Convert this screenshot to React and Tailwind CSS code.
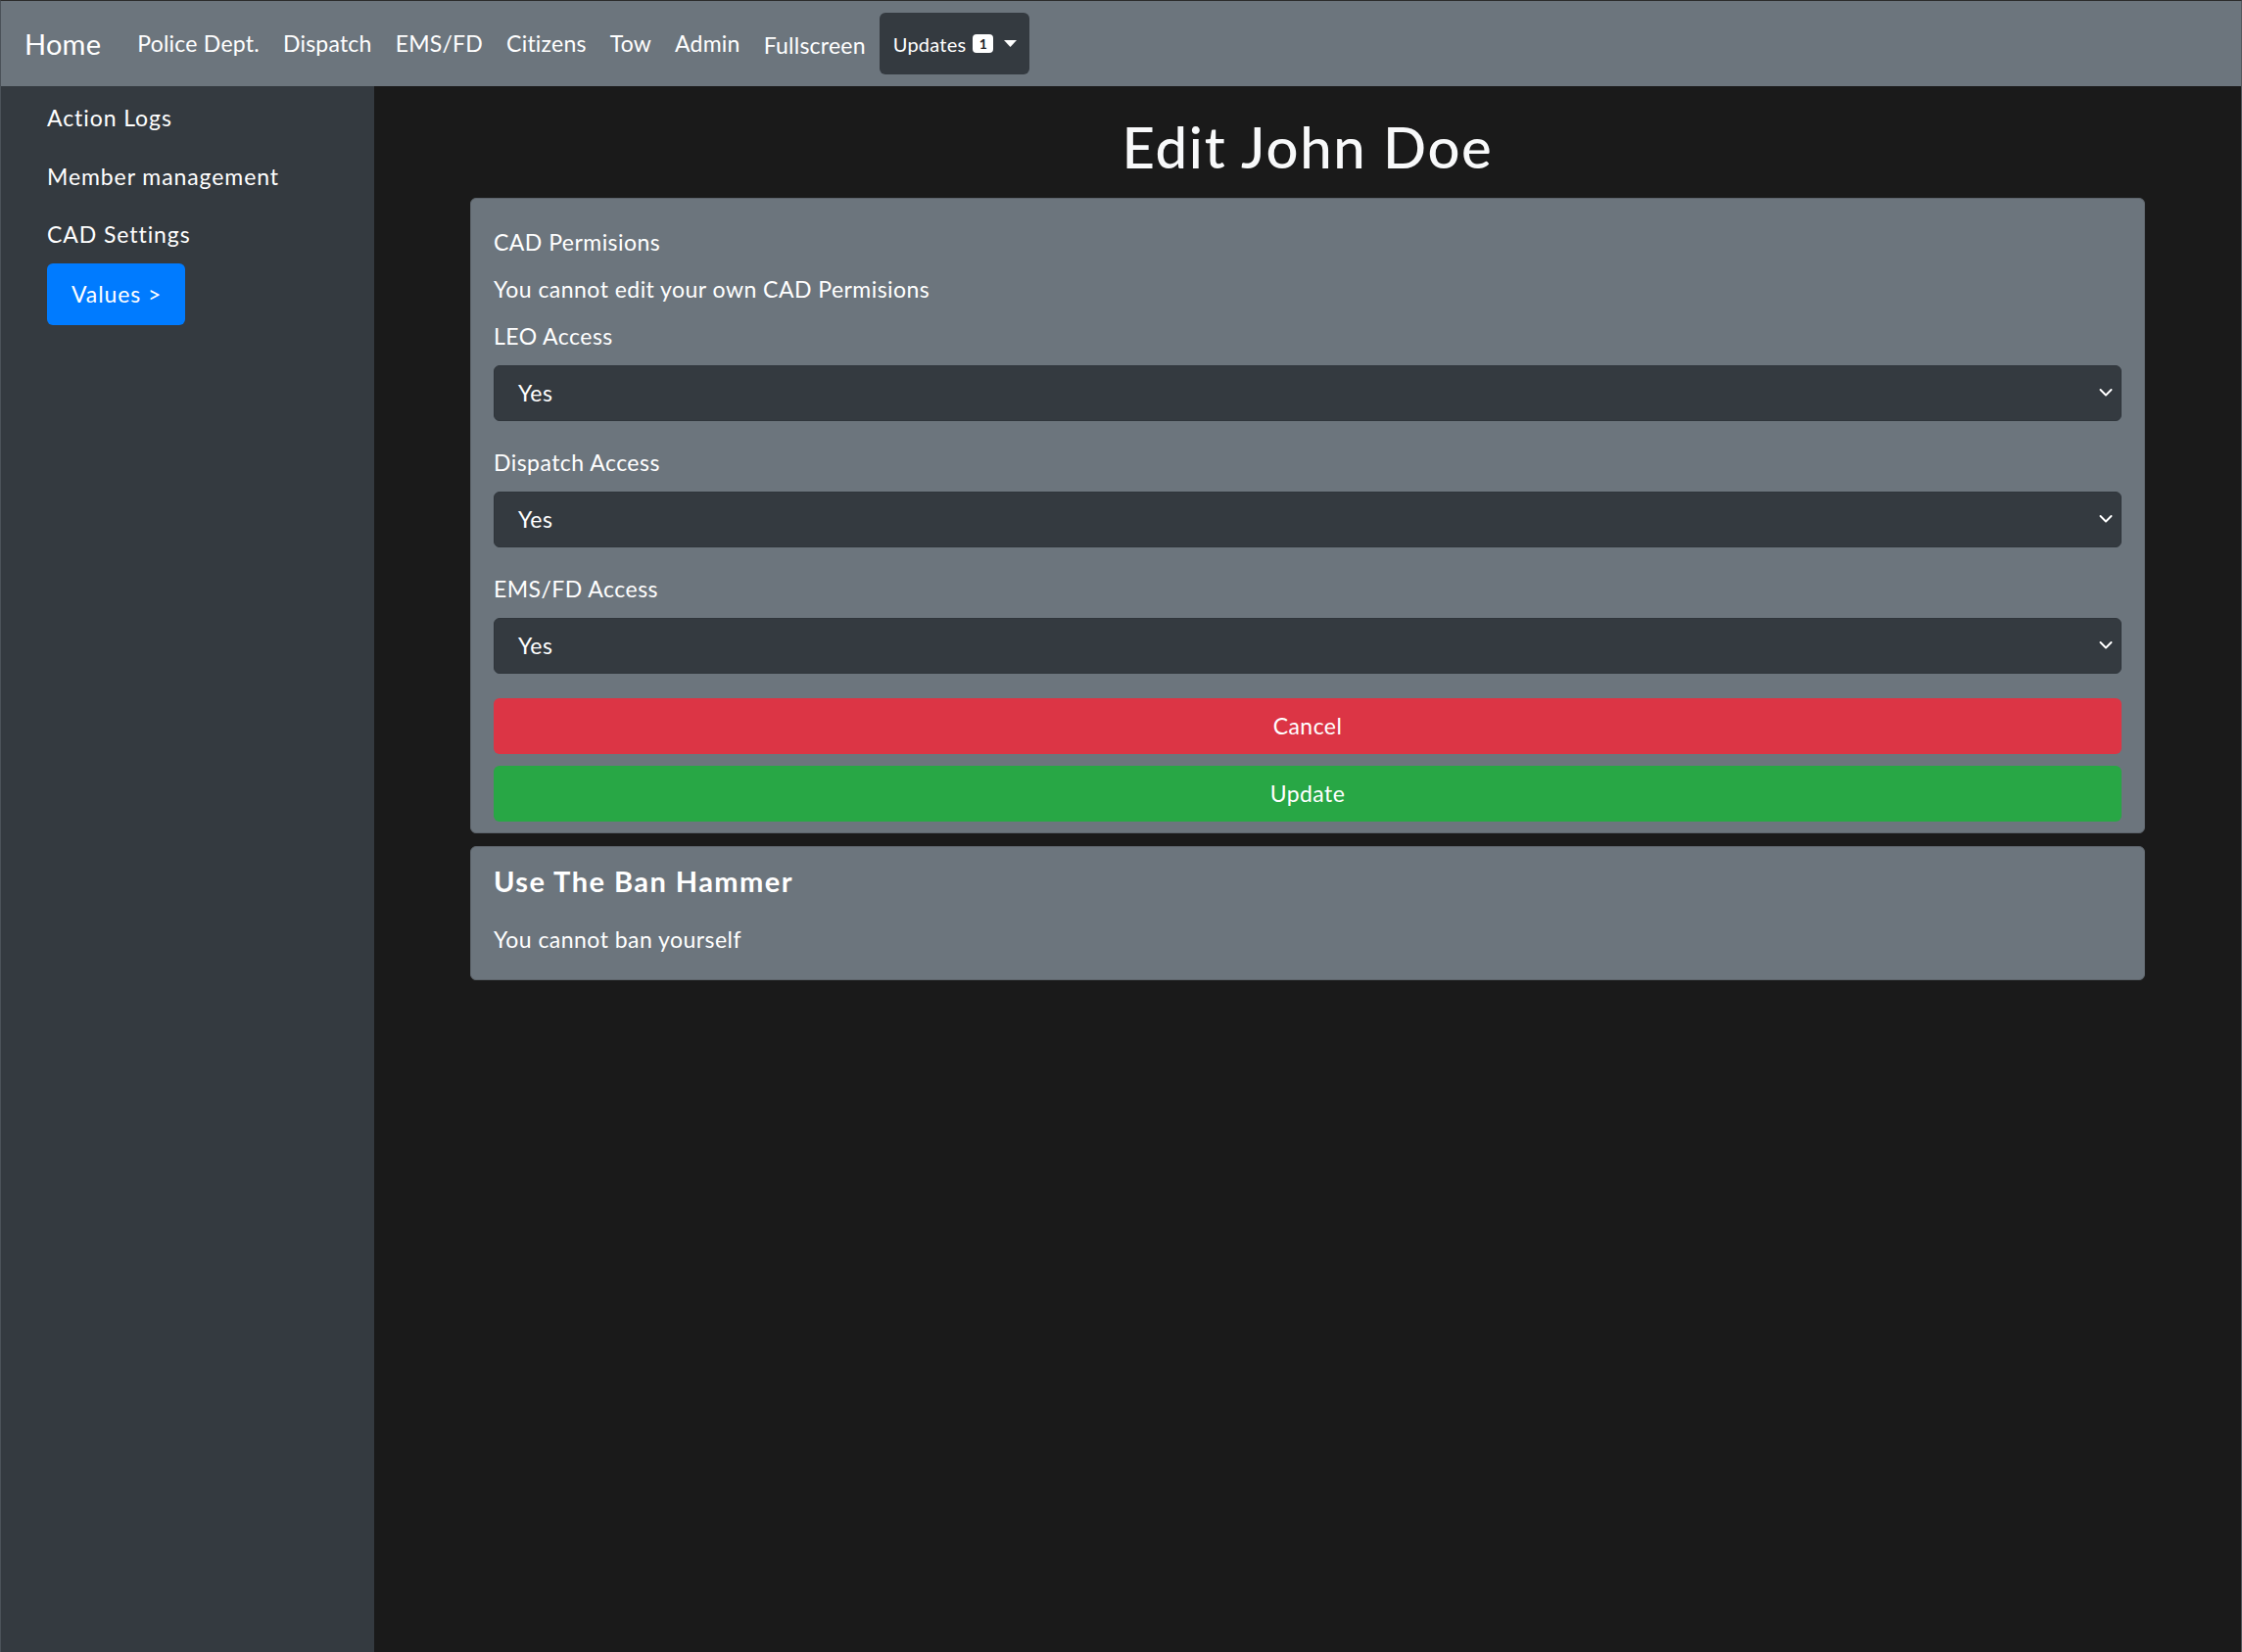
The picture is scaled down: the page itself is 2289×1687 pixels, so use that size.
import React from 'react';

const navLinks = ['Police Dept.', 'Dispatch', 'EMS/FD', 'Citizens', 'Tow', 'Admin'];

const Chevron = () => (
    <svg width="14" height="9" viewBox="0 0 14 9" className="absolute right-[8px] top-1/2 -translate-y-1/2">
        <path d="M1.5 1.5l5.5 5.5 5.5-5.5" fill="none" stroke="#ffffff" strokeWidth="2" strokeLinecap="round" strokeLinejoin="round" />
    </svg>
);

const AccessSelect = ({ label }) => (
    <div className="mb-[25px]">
        <p className="leading-[35px] mb-[12px]">{label}</p>
        <div className="relative h-[57px] bg-[#343a40] rounded-[6px] border border-[#30363c] flex items-center pl-[24px]">
            <span>Yes</span>
            <Chevron />
        </div>
    </div>
);

const App = () => {
    return (
        <div className="min-h-screen h-[1687px] flex flex-col border-t border-[#2b2b2b] border-l border-l-[#4b5259] border-r border-r-[#55595e] font-[Lato,'Liberation_Sans',sans-serif] text-white text-[23px] tracking-[0.02em]">
            {/* Top navbar */}
            <nav className="h-[87px] shrink-0 bg-[#6c757d] flex items-center tracking-[0.01em]">
                <span className="pl-[24px] text-[29px] mr-[25px]">Home</span>
                {navLinks.map((link) => (
                    <span key={link} className="px-[12px]">{link}</span>
                ))}
                <span className="px-[12px] pt-[4px]">Fullscreen</span>
                <div className="ml-[2px] h-[63px] bg-[#343a40] rounded-[6px] flex items-center pl-[14px] pr-[13px] text-[20px]">
                    <span>Updates</span>
                    <span className="ml-[7px] w-[21px] h-[19px] bg-white rounded-[4px] text-[#212529] text-[14px] font-bold tracking-normal flex items-center justify-center">1</span>
                    <svg width="13" height="7" viewBox="0 0 13 7" className="ml-[11px]">
                        <path d="M0 0h13L6.5 7z" fill="#ffffff" />
                    </svg>
                </div>
            </nav>

            <div className="flex flex-1">
                {/* Sidebar */}
                <aside className="w-[381px] shrink-0 bg-[#343a40] pt-[3px] pl-[47px] tracking-[0.04em]">
                    <div className="h-[59px] flex items-center">Action Logs</div>
                    <div className="h-[60px] flex items-center">Member management</div>
                    <div className="h-[59px] flex items-center">CAD Settings</div>
                    <div className="w-[141px] h-[63px] bg-[#007bff] rounded-[6px] flex items-center pl-[25px]">Values &gt;</div>
                </aside>

                {/* Main */}
                <main className="flex-1 bg-[#1a1a1a] pt-[27px]">
                    <h1 className="text-center text-[58px] leading-[1.2] font-medium text-[#f8f9fa] tracking-[0.03em] mb-[17px]">Edit John Doe</h1>

                    <div className="w-[1710px] mx-auto">
                        <div className="bg-[#6c757d] border border-[#5d646b] rounded-[6px] pt-[27px] px-[23px] pb-[11px]">
                            <p className="leading-[35px] mb-[13px]">CAD Permisions</p>
                            <p className="leading-[35px] mb-[13px]">You cannot edit your own CAD Permisions</p>
                            <AccessSelect label="LEO Access" />
                            <AccessSelect label="Dispatch Access" />
                            <AccessSelect label="EMS/FD Access" />
                            <div className="h-[57px] bg-[#dc3545] rounded-[6px] flex items-center justify-center mb-[12px]">Cancel</div>
                            <div className="h-[57px] bg-[#28a745] rounded-[6px] flex items-center justify-center">Update</div>
                        </div>

                        <div className="mt-[13px] bg-[#6c757d] border border-[#5d646b] rounded-[6px] pt-[17px] px-[23px] pb-[23px]">
                            <h5 className="text-[29px] font-bold leading-[35px] tracking-[0.05em] mb-[25px]">Use The Ban Hammer</h5>
                            <p className="leading-[35px]">You cannot ban yourself</p>
                        </div>
                    </div>
                </main>
            </div>
        </div>
    );
};

export default App;
